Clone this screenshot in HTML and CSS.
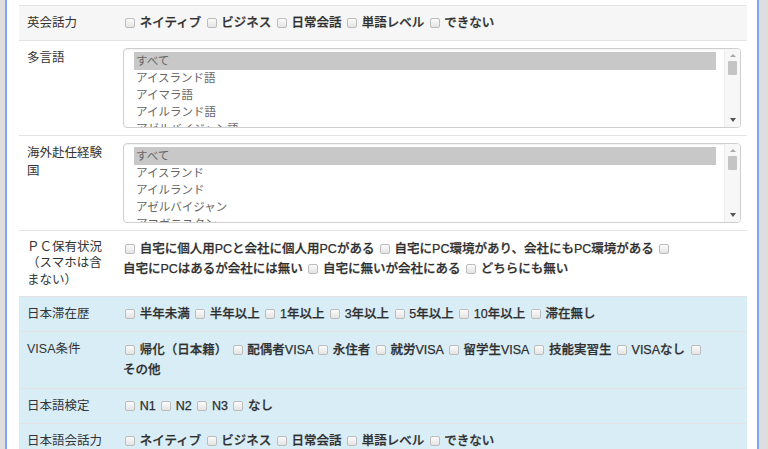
FILE: index.html
```html
<!DOCTYPE html>
<html lang="ja">
<head>
<meta charset="utf-8">
<link rel="stylesheet" href="styles.css">
</head>
<body>
<div class="frame">
  <div class="panel">
    <table class="search">
      <tr class="striped">
        <td class="lbl">英会話力</td>
        <td class="opts"><input type="checkbox"> <span class="t">ネイティブ</span> <input type="checkbox"> <span class="t">ビジネス</span> <input type="checkbox"> <span class="t">日常会話</span> <input type="checkbox"> <span class="t">単語レベル</span> <input type="checkbox"> <span class="t">できない</span></td>
      </tr>
      <tr>
        <td class="lbl">多言語</td>
        <td class="selcell">
          <div class="sel">
            <div class="list">
              <div class="o on">すべて</div>
              <div class="o">アイスランド語</div>
              <div class="o">アイマラ語</div>
              <div class="o">アイルランド語</div>
              <div class="o">アゼルバイジャン語</div>
            </div>
            <div class="sb"><span class="up"></span><span class="thumb"></span><span class="down"></span></div>
          </div>
        </td>
      </tr>
      <tr>
        <td class="lbl">海外赴任経験国</td>
        <td class="selcell">
          <div class="sel">
            <div class="list">
              <div class="o on">すべて</div>
              <div class="o">アイスランド</div>
              <div class="o">アイルランド</div>
              <div class="o">アゼルバイジャン</div>
              <div class="o">アフガニスタン</div>
            </div>
            <div class="sb"><span class="up"></span><span class="thumb"></span><span class="down"></span></div>
          </div>
        </td>
      </tr>
      <tr>
        <td class="lbl tight">ＰＣ保有状況（スマホは含まない）</td>
        <td class="opts multi"><input type="checkbox"> <span class="t">自宅に個人用PCと会社に個人用PCがある</span> <input type="checkbox"> <span class="t">自宅にPC環境があり、会社にもPC環境がある</span> <input type="checkbox"> <span class="t">自宅にPCはあるが会社には無い</span> <input type="checkbox"> <span class="t">自宅に無いが会社にある</span> <input type="checkbox"> <span class="t">どちらにも無い</span></td>
      </tr>
      <tr class="info">
        <td class="lbl">日本滞在歴</td>
        <td class="opts"><input type="checkbox"> <span class="t">半年未満</span> <input type="checkbox"> <span class="t">半年以上</span> <input type="checkbox"> <span class="t">1年以上</span> <input type="checkbox"> <span class="t">3年以上</span> <input type="checkbox"> <span class="t">5年以上</span> <input type="checkbox"> <span class="t">10年以上</span> <input type="checkbox"> <span class="t">滞在無し</span></td>
      </tr>
      <tr class="info">
        <td class="lbl">VISA条件</td>
        <td class="opts multi"><input type="checkbox"> <span class="t">帰化（日本籍）</span> <input type="checkbox"> <span class="t">配偶者VISA</span> <input type="checkbox"> <span class="t">永住者</span> <input type="checkbox"> <span class="t">就労VISA</span> <input type="checkbox"> <span class="t">留学生VISA</span> <input type="checkbox"> <span class="t">技能実習生</span> <input type="checkbox"> <span class="t">VISAなし</span> <input type="checkbox"> <span class="t">その他</span></td>
      </tr>
      <tr class="info">
        <td class="lbl">日本語検定</td>
        <td class="opts"><input type="checkbox"> <span class="t">N1</span> <input type="checkbox"> <span class="t">N2</span> <input type="checkbox"> <span class="t">N3</span> <input type="checkbox"> <span class="t">なし</span></td>
      </tr>
      <tr class="info">
        <td class="lbl">日本語会話力</td>
        <td class="opts"><input type="checkbox"> <span class="t">ネイティブ</span> <input type="checkbox"> <span class="t">ビジネス</span> <input type="checkbox"> <span class="t">日常会話</span> <input type="checkbox"> <span class="t">単語レベル</span> <input type="checkbox"> <span class="t">できない</span></td>
      </tr>
    </table>
  </div>
</div>
</body>
</html>
```

FILE: styles.css
```css
html, body {
  margin: 0;
  padding: 0;
  height: 100%;
  overflow: hidden;
}
body {
  background: #dedede;
  font-family: "Liberation Sans", "Noto Sans CJK JP", sans-serif;
  font-size: 12.5px;
  color: #333;
}
.frame {
  padding: 0 9px 0 5px;
  height: 100%;
  box-sizing: border-box;
}
.panel {
  background: #fff;
  border-left: 2px solid #7ea6f4;
  border-right: 2px solid #7ea6f4;
  height: 100%;
  box-sizing: border-box;
  padding: 5px 10px 0 12px;
}
.search {
  width: 100%;
  border-collapse: collapse;
}
.search td {
  border-top: 1px solid #e3e3e3;
  padding: 8px;
  line-height: 18px;
  vertical-align: top;
}
.striped td {
  background: #f6f6f6;
}
.info td {
  background: #d9edf7;
}
.lbl {
  width: 80px;
  font-weight: normal;
}
.search td.tight {
  line-height: 16.4px;
}
.opts {
  font-weight: 500;
  color: #2e2e2e;
  -webkit-text-stroke: 0.25px #2e2e2e;
}
.search td.multi {
  line-height: 20px;
}
.t {
  white-space: nowrap;
}
.opts input {
  -webkit-appearance: none;
  appearance: none;
  width: 10px;
  height: 10px;
  margin: 0 1.2px 0 2px;
  border: 1px solid #bcbcbc;
  border-radius: 2px;
  background: linear-gradient(#fbfbfb, #e4e4e4);
  vertical-align: -1px;
  box-sizing: border-box;
}
.search td.selcell {
  padding: 7px 6px 7px 8px;
}
.sel {
  display: flex;
  height: 80px;
  box-sizing: border-box;
  border: 1px solid #cfcfcf;
  border-radius: 4px;
  box-shadow: inset 0 1px 1px rgba(0, 0, 0, 0.06);
  overflow: hidden;
  background: #fff;
}
.list {
  flex: 1;
  padding: 3px 8px 0 10px;
  overflow: hidden;
}
.o {
  font-size: 11.5px;
  line-height: 17px;
  color: #666;
  padding-left: 2px;
  white-space: nowrap;
}
.o.on {
  background: #c8c8c8;
  line-height: 18px;
}
.sb {
  width: 15px;
  background: #f7f7f7;
  border-left: 1px solid #ececec;
  display: flex;
  flex-direction: column;
  align-items: center;
}
.up {
  margin-top: 5px;
  width: 0;
  height: 0;
  border-left: 3px solid transparent;
  border-right: 3px solid transparent;
  border-bottom: 3px solid #a8a8a8;
}
.thumb {
  margin-top: 4px;
  width: 9px;
  height: 14px;
  background: #c4c4c4;
  border-radius: 1px;
}
.down {
  margin-top: auto;
  margin-bottom: 5px;
  width: 0;
  height: 0;
  border-left: 3px solid transparent;
  border-right: 3px solid transparent;
  border-top: 4px solid #555;
}
```
